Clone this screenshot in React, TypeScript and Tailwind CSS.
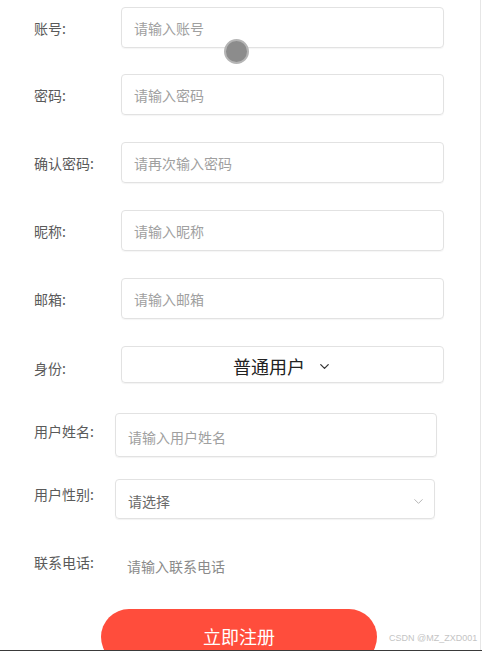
import { ChevronDown } from "lucide-react";

const font = { fontFamily: '"Noto Sans CJK SC", "Noto Sans", sans-serif' };

function Field({ label, placeholder, top }: { label: string; placeholder: string; top: string }) {
  return (
    <div className={`flex items-center ${top}`}>
      <span className="w-[121px] shrink-0 whitespace-nowrap pl-[34px] text-[14px] leading-[20px] text-[#5a5a5a]">
        {label}
      </span>
      <div className="flex h-[41px] w-[323px] items-center rounded-[4px] border border-[#e2e2e2] px-[12px] text-[14px] leading-[20px] text-[#a0a0a0] shadow-[0_1px_1px_rgba(0,0,0,0.04)]">
        {placeholder}
      </div>
    </div>
  );
}

export default function App() {
  return (
    <div className="relative h-[651px] w-[482px] overflow-hidden bg-white" style={font}>
      <div className="flex h-[650px] w-[481px] flex-col border-r border-[#e6e6e6] pt-[7px]">
        <Field label="账号:" placeholder="请输入账号" top="" />
        <Field label="密码:" placeholder="请输入密码" top="mt-[26px]" />
        <Field label="确认密码:" placeholder="请再次输入密码" top="mt-[27px]" />
        <Field label="昵称:" placeholder="请输入昵称" top="mt-[27px]" />
        <Field label="邮箱:" placeholder="请输入邮箱" top="mt-[27px]" />

        <div className="mt-[27px] flex items-center">
          <span className="w-[121px] shrink-0 whitespace-nowrap pl-[34px] pt-[6px] text-[14px] leading-[20px] text-[#5a5a5a]">
            身份:
          </span>
          <div className="flex h-[37px] w-[323px] items-center justify-center gap-[12px] rounded-[4px] border border-[#e2e2e2] pt-[3px] text-[18px] leading-[22px] text-[#222] shadow-[0_1px_1px_rgba(0,0,0,0.05)]">
            <span>普通用户</span>
            <ChevronDown className="size-[15px] text-[#333]" strokeWidth={2} />
          </div>
        </div>

        <div className="mt-[30px] flex items-start">
          <span className="w-[115px] shrink-0 whitespace-nowrap pl-[34px] pt-[8px] text-[14px] leading-[20px] text-[#5a5a5a]">
            用户姓名:
          </span>
          <div className="flex h-[44px] w-[322px] items-center rounded-[4px] border border-[#e2e2e2] px-[12px] pt-[4px] text-[14px] leading-[20px] text-[#a0a0a0] shadow-[0_1px_1px_rgba(0,0,0,0.05)]">
            请输入用户姓名
          </div>
        </div>

        <div className="mt-[22px] flex items-start">
          <span className="w-[115px] shrink-0 whitespace-nowrap pl-[34px] pt-[5px] text-[14px] leading-[20px] text-[#5a5a5a]">
            用户性别:
          </span>
          <div className="flex h-[40px] w-[320px] items-center justify-between rounded-[4px] border border-[#e2e2e2] pl-[12px] pr-[8px] pt-[4px] text-[14px] leading-[20px] text-[#6a6a6a] shadow-[0_1px_1px_rgba(0,0,0,0.05)]">
            <span>请选择</span>
            <ChevronDown className="size-[15px] text-[#b0b0b0]" strokeWidth={1.5} />
          </div>
        </div>

        <div className="mt-[33px] flex items-start">
          <span className="w-[115px] shrink-0 whitespace-nowrap pl-[34px] text-[14px] leading-[20px] text-[#5a5a5a]">
            联系电话:
          </span>
          <span className="pl-[12px] pt-[4px] text-[14px] leading-[20px] text-[#8a8a8a]">请输入联系电话</span>
        </div>

        <div className="mt-[33px] flex pl-[101px]">
          <button className="flex h-[56px] w-[276px] items-start justify-center rounded-full bg-[#ff4d3c] pt-[15px] text-[18px] leading-[24px] text-white">
            立即注册
          </button>
        </div>
      </div>

      <div className="absolute left-[224px] top-[39px] h-[25px] w-[25px] rounded-full border-2 border-[#b5b5b5] bg-[#8c8c8c]" />
      <span
        className="absolute left-[389px] top-[633px] text-[9px] leading-[11px] text-[#c4c4c4]"
        style={{ fontFamily: '"Liberation Sans", sans-serif' }}
      >
        CSDN @MZ_ZXD001
      </span>
      <div className="absolute bottom-0 left-0 h-[1px] w-full bg-[#3a3a3a]" />
    </div>
  );
}
